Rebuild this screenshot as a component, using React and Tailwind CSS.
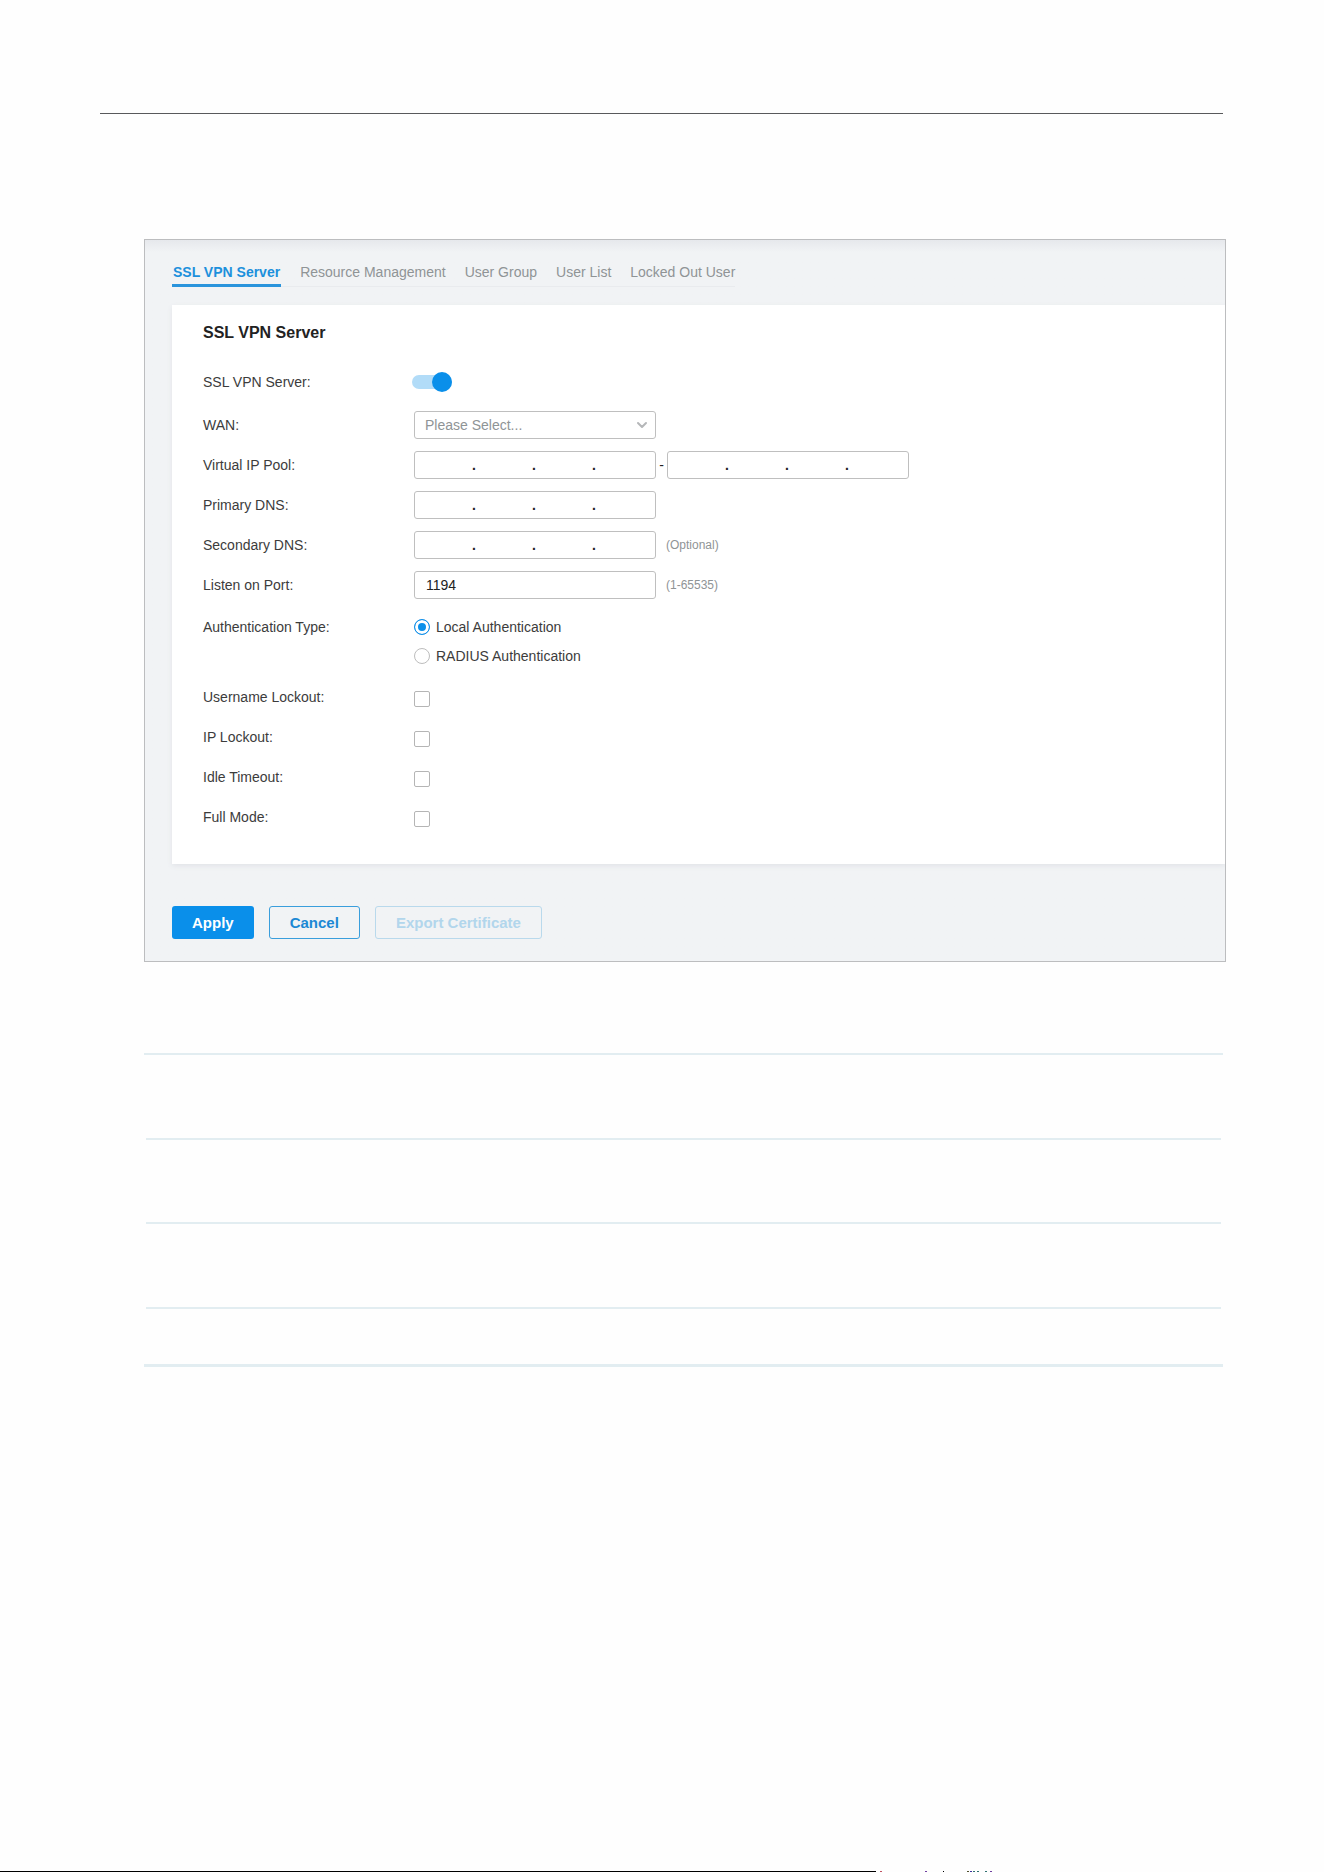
import React from "react";
import { ChevronDown } from "lucide-react";

const tabs = ["Resource Management", "User Group", "User List", "Locked Out User"];
const lockouts = ["Username Lockout", "IP Lockout", "Idle Timeout", "Full Mode"];

function Row({ label, htmlFor, className = "", children }) {
  return (
    <div className={`flex h-7 items-center ${className}`}>
      <label htmlFor={htmlFor} className="w-[211px] shrink-0">
        {label}:
      </label>
      {children}
    </div>
  );
}

function IpField({ id, name }) {
  return (
    <div
      role="group"
      aria-label={name}
      className="flex h-7 w-[242px] shrink-0 items-center rounded-[3px] border border-[#bfbfbf] bg-white pl-px pr-[3px]"
    >
      {[0, 1, 2, 3].map((n) => (
        <React.Fragment key={n}>
          {n > 0 && <span className="w-1 shrink-0 text-center font-bold text-[#222]">.</span>}
          <input
            id={n === 0 ? id : undefined}
            aria-label={`${name} octet ${n + 1}`}
            className="h-6 w-14 min-w-0 bg-transparent text-center outline-none"
          />
        </React.Fragment>
      ))}
    </div>
  );
}

function AuthOption({ label, checked }) {
  return (
    <label className="flex h-7 items-center gap-[6px]">
      <input
        type="radio"
        name="auth"
        defaultChecked={checked}
        className="m-0 size-4 appearance-none rounded-full border border-[#bdbdbd] bg-white checked:border-[#1490e8] checked:bg-[#0a8fea] checked:shadow-[inset_0_0_0_3px_white]"
      />
      {label}
    </label>
  );
}

export default function App() {
  return (
    <div className="flex min-h-screen flex-col bg-[#fefefe] font-['Liberation_Sans',Arial,sans-serif] text-sm leading-5 text-[#3c3c3c]">
      <hr className="mt-[113px] mr-[101px] ml-[100px] border-t border-[#58595b]" />

      <main className="mt-[125px] mr-[98px] ml-[144px] overflow-hidden border border-[#bcbdbf] bg-[#f1f3f5] bg-linear-to-b from-[#e6e8ec] to-[#f1f3f5] to-[12px] pb-[22px] pl-[27px]">
        <nav className="flex pt-[22px]">
          <div className="flex border-b border-[#e9ebee]">
            <a
              href="#server"
              aria-current="page"
              className="-mb-px h-[25px] border-b-[3px] border-[#2a94dc] px-px font-bold text-[#1c90dc]"
            >
              SSL VPN Server
            </a>
            {tabs.map((tab) => (
              <a key={tab} href="#tab" className="ml-[19px] text-[#8f9496]">
                {tab}
              </a>
            ))}
          </div>
        </nav>

        <section className="mt-[18px] bg-white pt-[18px] pb-8 pl-[31px] shadow-[0_2px_5px_#e2e4e8]">
          <h1 className="text-base leading-5 font-bold text-[#222]">SSL VPN Server</h1>

          <Row label="SSL VPN Server" htmlFor="enable" className="mt-[25px]">
            <input
              id="enable"
              type="checkbox"
              role="switch"
              defaultChecked
              className="relative -ml-0.5 h-[14px] w-10 appearance-none rounded-full bg-[#d5d5d5] before:absolute before:-top-[3px] before:left-0 before:size-5 before:rounded-full before:bg-[#999] checked:bg-[#b2dcf8] checked:before:left-5 checked:before:bg-[#0a8fea]"
            />
          </Row>

          <div className="mt-[15px] flex flex-col gap-3">
            <Row label="WAN" htmlFor="wan">
              <div className="relative">
                <select
                  id="wan"
                  className="block h-7 w-[242px] appearance-none rounded-[3px] border border-[#bfbfbf] bg-white pl-[10px] text-[#8f9496]"
                >
                  <option>Please Select...</option>
                </select>
                <ChevronDown
                  size={16}
                  strokeWidth={3}
                  className="pointer-events-none absolute top-[6px] right-[6px] text-[#b5b7b9]"
                />
              </div>
            </Row>
            <Row label="Virtual IP Pool" htmlFor="pool">
              <IpField id="pool" name="Pool start" />
              <span className="w-[11px] shrink-0 text-center text-[#222]">-</span>
              <IpField name="Pool end" />
            </Row>
            <Row label="Primary DNS" htmlFor="dns1">
              <IpField id="dns1" name="Primary DNS" />
            </Row>
            <Row label="Secondary DNS" htmlFor="dns2">
              <IpField id="dns2" name="Secondary DNS" />
              <span className="ml-[10px] text-xs text-[#8f9496]">(Optional)</span>
            </Row>
            <Row label="Listen on Port" htmlFor="port">
              <input
                id="port"
                defaultValue="1194"
                className="h-7 w-[242px] rounded-[3px] border border-[#bfbfbf] bg-white px-[11px] text-[#222]"
              />
              <span className="ml-[10px] text-xs text-[#8f9496]">(1-65535)</span>
            </Row>
          </div>

          <div role="radiogroup" aria-labelledby="auth-label" className="mt-[14px] flex items-start">
            <span id="auth-label" className="w-[211px] shrink-0 leading-7">
              Authentication Type:
            </span>
            <div className="flex flex-col gap-px">
              <AuthOption label="Local Authentication" checked />
              <AuthOption label="RADIUS Authentication" />
            </div>
          </div>

          <div className="mt-[14px] flex flex-col gap-3">
            {lockouts.map((name) => (
              <div key={name} className="flex h-7 items-center">
                <label htmlFor={name} className="w-[211px] shrink-0 pb-0.5">
                  {name}:
                </label>
                <input
                  id={name}
                  type="checkbox"
                  className="mt-0.5 size-4 appearance-none rounded-[2px] border border-[#b5b5b5] bg-white checked:bg-[#0a8fea]"
                />
              </div>
            ))}
          </div>
        </section>

        <div className="mt-[42px] flex gap-[15px] text-[15px] font-bold">
          <button className="h-[33px] rounded-[3px] bg-[#0a8fea] px-5 text-white">
            Apply
          </button>
          <button className="h-[33px] rounded-[3px] border border-[#3a9edc] px-5 text-[#1c88d4]">
            Cancel
          </button>
          <button disabled className="h-[33px] rounded-[3px] border border-[#b9d9ec] px-5 text-[#b2d6ec]">
            Export Certificate
          </button>
        </div>
      </main>

      <div className="mt-[91px] mr-[101px] ml-[144px] border-y-2 border-b-3 border-[#e2edf1] px-0.5">
        <div className="h-[85px] border-b-2 border-[#e2edf1]" />
        <div className="h-[84px] border-b-2 border-[#e2edf1]" />
        <div className="h-[85px] border-b-2 border-[#e2edf1]" />
        <div className="h-[55px]" />
      </div>

      <div className="mt-auto flex h-px" aria-hidden="true">
        <span className="w-[876px] bg-black" />
        <span className="ml-1 w-0.5 bg-[#c05060]" />
        <span className="ml-[43px] w-0.5 bg-[#7040a0]" />
        <span className="ml-4 w-px bg-black" />
        <span className="ml-[23px] w-0.5 bg-[#505030]" />
        <span className="ml-px w-0.5 bg-[#4030a0]" />
        <span className="ml-px w-0.5 bg-[#307070]" />
        <span className="ml-0.5 w-0.5 bg-[#307070]" />
        <span className="ml-1.5 w-0.5 bg-[#307070]" />
        <span className="ml-[3px] w-0.5 bg-[#7040a0]" />
      </div>
    </div>
  );
}
